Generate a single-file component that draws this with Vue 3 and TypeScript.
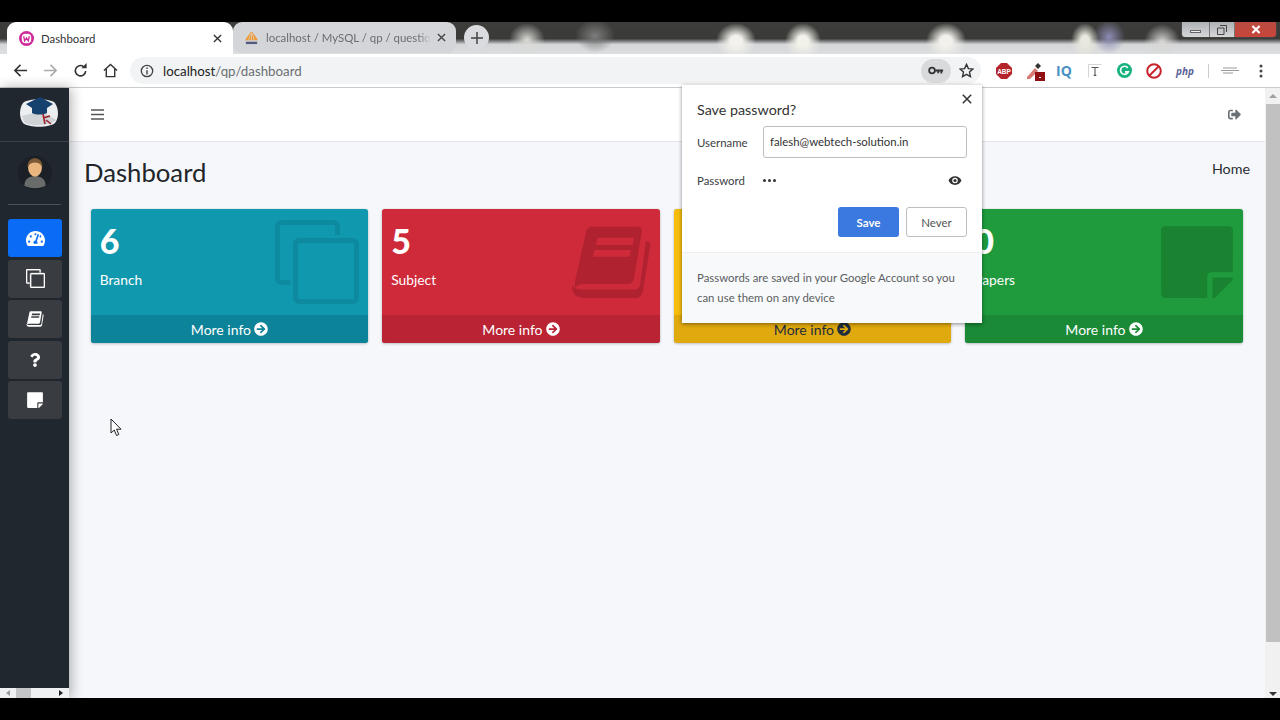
<script setup lang="ts">
interface Card {
  count: string
  label: string
  tone: string
  icon: string
  box: string
  path: string
}

const arrowPath = 'M256 8c137 0 248 111 248 248S393 504 256 504 8 393 8 256 119 8 256 8zm-28.9 143.6l75.5 72.4H120c-13.3 0-24 10.7-24 24v16c0 13.3 10.7 24 24 24h182.6l-75.5 72.4c-9.7 9.3-9.9 24.8-.4 34.3l11 10.9c9.4 9.4 24.6 9.4 33.9 0L404.3 273c9.4-9.4 9.4-24.6 0-33.9L271.6 106.3c-9.4-9.4-24.6-9.4-33.9 0l-11 10.9c-9.5 9.6-9.3 25.1.4 34.4z'
const bookPath = 'M648 80H785q17 0 14 17L776 236q-3 15-18 15H625q-18 0-24 12-4-12 1-30L632 100q4-20 16-20zM667 113H776L772 135H663zM658 150H767L763 170H654zM812 122L826 130 803 272q-4 20-22 21H625q-28 0-34-28-1-4 3-9 4 12 26 12H775q16 0 19-14z'
const notePath = 'M312 320h136V56c0-13.3-10.7-24-24-24H24C10.7 32 0 42.7 0 56v400c0 13.3 10.7 24 24 24h264V344c0-13.2 10.8-24 24-24zm129 55l-98 98c-4.500 4.500-10.600 7-17 7h-6V352h128v6.100c0 6.300-2.500 12.400-7 16.900z'
const clonePath = 'M24 18h54a6 6 0 0 1 6 6v54a6 6 0 0 1-6 6H24a6 6 0 0 1-6-6V24a6 6 0 0 1 6-6zm0 5a1 1 0 0 0-1 1v54a1 1 0 0 0 1 1h54a1 1 0 0 0 1-1V24a1 1 0 0 0-1-1zM6 0h53a6 6 0 0 1 6 6v9h-5V6a1 1 0 0 0-1-1H6a1 1 0 0 0-1 1v53a1 1 0 0 0 1 1h9v5H6a6 6 0 0 1-6-6V6a6 6 0 0 1 6-6z'
const gaugePath = 'M288 32C128.94 32 0 160.94 0 320c0 52.8 14.25 102.26 39.06 144.8 5.61 9.62 16.3 15.2 27.44 15.2h443c11.14 0 21.83-5.58 27.44-15.2C561.75 422.26 576 372.8 576 320c0-159.06-128.94-288-288-288zm0 64c14.71 0 26.58 10.13 30.32 23.65-1.11 2.26-2.64 4.23-3.45 6.67l-9.22 27.67c-5.13 3.49-10.97 6.01-17.64 6.01-17.67 0-32-14.33-32-32S270.33 96 288 96zM96 384c-17.67 0-32-14.33-32-32s14.33-32 32-32 32 14.33 32 32-14.33 32-32 32zm48-160c-17.67 0-32-14.33-32-32s14.33-32 32-32 32 14.33 32 32-14.33 32-32 32zm246.77-72.41l-61.33 184C343.13 347.33 352 364.54 352 384c0 11.72-3.38 22.55-8.88 32H232.88c-5.5-9.45-8.88-20.28-8.88-32 0-33.94 26.5-61.43 59.9-63.59l61.34-184.01c4.17-12.56 17.73-19.45 30.36-15.17 12.57 4.19 19.35 17.79 15.17 30.36zm14.66 57.2l15.52-46.55c3.47-1.29 7.13-2.23 11.05-2.23 17.67 0 32 14.33 32 32s-14.33 32-32 32c-11.38-.01-20.89-6.28-26.57-15.22zM480 384c-17.67 0-32-14.33-32-32s14.33-32 32-32 32 14.33 32 32-14.33 32-32 32z'
const questionPath = 'M202.021 0C122.202 0 70.503 32.703 29.914 91.026c-7.363 10.58-5.093 25.086 5.178 32.874l43.138 32.709c10.373 7.865 25.132 6.026 33.253-4.148 25.049-31.381 43.63-49.449 82.757-49.449 30.764 0 68.816 19.799 68.816 49.631 0 22.552-18.617 34.134-48.993 51.164-35.423 19.86-82.299 44.576-82.299 106.405V320c0 13.255 10.745 24 24 24h72.471c13.255 0 24-10.745 24-24v-5.773c0-42.86 125.268-44.645 125.268-160.627C377.504 66.256 286.902 0 202.021 0zM192 373.459c-38.196 0-69.271 31.075-69.271 69.271 0 38.195 31.075 69.27 69.271 69.27s69.271-31.075 69.271-69.271-31.075-69.27-69.271-69.27z'
const signOutPath = 'M497 273L329 441c-15 15-41 4.5-41-17v-96H152c-13.3 0-24-10.7-24-24v-96c0-13.3 10.7-24 24-24h136V88c0-21.4 25.9-32 41-17l168 168c9.3 9.4 9.3 24.6 0 34zM192 436v-40c0-6.6-5.4-12-12-12H96c-17.7 0-32-14.3-32-32V160c0-17.7 14.3-32 32-32h84c6.6 0 12-5.4 12-12V76c0-6.6-5.4-12-12-12H96c-53 0-96 43-96 96v192c0 53 43 96 96 96h84c6.6 0 12-5.4 12-12z'

const bookBox = '585 78 245 218'
const cloneBox = '0 0 84 84'

const navItems = [
  { box: '0 0 576 512', path: gaugePath, cls: 'is-active nav-gauge' },
  { box: cloneBox, path: clonePath, cls: 'nav-clone' },
  { box: bookBox, path: bookPath, cls: 'nav-book' },
  { box: '0 0 384 512', path: questionPath, cls: 'nav-question' },
  { box: '0 0 448 512', path: notePath, cls: 'nav-note' },
]

const cards: Card[] = [
  { count: '6', label: 'Branch', tone: 'teal', icon: 'ic-clone', box: cloneBox, path: clonePath },
  { count: '5', label: 'Subject', tone: 'red', icon: 'ic-book', box: bookBox, path: bookPath },
  { count: '', label: '', tone: 'yellow', icon: 'ic-q', box: '0 0 384 512', path: questionPath },
  { count: '0', label: 'Papers', tone: 'green', icon: 'ic-note', box: '0 0 448 512', path: notePath },
]
</script>

<template>
  <div class="screen">
    <div class="letterbox"></div>

    <div class="tabstrip">
      <div class="tab tab-active">
        <svg class="favicon" viewBox="0 0 16 16">
          <circle cx="8" cy="8" r="8" fill="#cd2a9b" />
          <rect x="3" y="3" width="10" height="10" rx="4" fill="#fff" />
          <path d="M5 5.500l1 5 2-3 2 3 1-5" fill="none" stroke="#cd2a9b" stroke-width="1.400" />
        </svg>
        <span class="tab-title">Dashboard</span>
        <svg class="tab-x" viewBox="0 0 10 10"><path d="M1 1l8 8M9 1l-8 8" stroke="#333" stroke-width="1.500" /></svg>
      </div>
      <div class="tab tab-idle">
        <svg class="favicon" viewBox="0 0 16 16">
          <path d="M1 11L7 2h2l6 9z" fill="#ee9a33" />
          <path d="M5 11l2-8M8 11V3M11 11L9 3" stroke="#d9d9dc" stroke-width=".7" />
          <rect x="2" y="12.500" width="12" height="2.500" fill="#555b80" />
        </svg>
        <span class="tab-title tab-title-idle">localhost / MySQL / qp / questio</span>
        <svg class="tab-x" viewBox="0 0 10 10"><path d="M1 1l8 8M9 1l-8 8" stroke="#444" stroke-width="1.500" /></svg>
      </div>
      <div class="new-tab">
        <svg viewBox="0 0 12 12"><path d="M6 0v12M0 6h12" stroke="#444" stroke-width="1.500" /></svg>
      </div>
      <div class="win-controls">
        <div class="win-btn win-min"><span></span></div>
        <div class="win-btn win-max">
          <svg viewBox="0 0 10 10"><path d="M3 .5h6.500v6.500M.5 3h6.500v6.500h-6.500z" fill="none" stroke="#444" /></svg>
        </div>
        <div class="win-btn win-close">
          <svg viewBox="0 0 10 10"><path d="M1 1l8 8M9 1l-8 8" stroke="#fff" stroke-width="2.400" /></svg>
        </div>
      </div>
    </div>

    <div class="toolbar">
      <svg class="tb-ico tb-first" viewBox="0 0 16 16"><path d="M15 8H2M8 2L2 8l6 6" fill="none" stroke="#333" stroke-width="1.700" /></svg>
      <svg class="tb-ico" viewBox="0 0 16 16"><path d="M1 8h13M8 2l6 6-6 6" fill="none" stroke="#aaa" stroke-width="1.700" /></svg>
      <svg class="tb-ico" viewBox="0 0 16 16"><path d="M13.500 8.500A5.500 5.500 0 1 1 11.500 4" fill="none" stroke="#333" stroke-width="1.700" /><path d="M9 5.500h5.500V0z" fill="#333" /></svg>
      <svg class="tb-ico" viewBox="0 0 16 16"><path d="M1 8l7-6.500L15 8M3.500 6.500V14.500h9V6.500" fill="none" stroke="#333" stroke-width="1.500" /></svg>
      <div class="omnibox">
        <svg class="info" viewBox="0 0 16 16"><circle cx="8" cy="8" r="6.500" fill="none" stroke="#444" stroke-width="1.500" /><path d="M8 7v5M8 4v1.600" stroke="#444" stroke-width="1.600" /></svg>
        <span class="url"><b>localhost</b>/qp/dashboard</span>
        <span class="omni-space"></span>
        <div class="key-chip">
          <svg viewBox="0 0 18 10"><circle cx="4.500" cy="5" r="3.200" fill="none" stroke="#333" stroke-width="2" /><path d="M8 4h9v2h-1v2.500h-2V6h-1.500v2h-2V6H8z" fill="#333" /></svg>
        </div>
        <svg class="star" viewBox="0 0 16 16"><path d="M8 1.500l2 4.500 4.800.5-3.600 3.200 1 4.800L8 12.100l-4.200 2.400 1-4.800L1.200 6.500 6 6z" fill="none" stroke="#333" stroke-width="1.500" /></svg>
      </div>
      <div class="extensions">
        <svg class="ext ext-abp" viewBox="0 0 16 16"><path d="M5 0h6l5 5v6l-5 5H5l-5-5V5z" fill="#b5232a" /><text x="8" y="10.500" class="abp-text" text-anchor="middle">ABP</text></svg>
        <svg class="ext ext-drop" viewBox="0 0 20 20"><path d="M1 16L9 7l3 3-8 8H1z" fill="#d97a72" /><path d="M9 5l3-3 3 3-3 3z" fill="#333" /><rect x="9" y="11" width="10" height="9" fill="#8f0f10" /><rect x="13" y="16" width="2" height="1" fill="#fff" /></svg>
        <span class="ext-iq">IQ</span>
        <svg class="ext ext-t" viewBox="0 0 16 16"><path d="M.5 15.500V.5h15" fill="none" stroke="#ccc" /><path d="M4 4h8M8 4v9M6.500 13h3" stroke="#555" stroke-width="1.200" fill="none" /></svg>
        <svg class="ext ext-g" viewBox="0 0 16 16"><circle cx="8" cy="8" r="8" fill="#15b27f" /><path d="M11.500 5.200A4.300 4.300 0 1 0 12 9.500H8.500" fill="none" stroke="#fff" stroke-width="1.800" /></svg>
        <svg class="ext ext-no" viewBox="0 0 16 16"><circle cx="8" cy="8" r="6.800" fill="none" stroke="#c8232c" stroke-width="2" /><path d="M3.500 12.500l9-9" stroke="#c8232c" stroke-width="2" /></svg>
        <span class="ext-php">php</span>
        <span class="ext-sep"></span>
        <svg class="ext ext-web" viewBox="0 0 18 8"><path d="M2 1h14M0 3.500h18M2 6h10" stroke="#999" stroke-width="1" /></svg>
        <svg class="ext-menu" viewBox="0 0 4 14"><circle cx="2" cy="2" r="1.500" fill="#444" /><circle cx="2" cy="7" r="1.500" fill="#444" /><circle cx="2" cy="12" r="1.500" fill="#444" /></svg>
      </div>
    </div>

    <div class="page">
      <aside class="sidebar">
        <div class="brand">
          <svg class="logo" viewBox="0 0 40 32">
            <path d="M4 7C9 2 31 2 36 7c4 6 4 15 0 20-6 5-26 5-32 0C0 21 0 13 4 7z" fill="#eceef0" />
            <path d="M3 20l20-5 14 9c-6 6-26 7-32 2z" fill="#cfd3d6" />
            <path d="M7 8L21 1l13 7-6 4v5c-5 2-11 2-15 0v-5z" fill="#16406e" />
            <path d="M24 18l2 10M24 22l7-2M27 24l5 4" stroke="#9a1f2a" stroke-width="1.600" fill="none" />
          </svg>
        </div>
        <div class="user">
          <svg class="avatar" viewBox="0 0 32 32">
            <circle cx="16" cy="16" r="16" fill="#1a2026" />
            <path d="M6 28c0-7 5-9 10-9s10 2 10 9c-5 3-15 3-20 0z" fill="#6a6b6b" />
            <ellipse cx="16" cy="11" rx="6.500" ry="8.500" fill="#eab57e" />
            <path d="M9 10c0-6 4-8 7-8s7 2 7 8c-2-3-4-4-7-4s-5 1-7 4z" fill="#7a5a36" />
          </svg>
        </div>
        <nav class="nav">
          <div v-for="item in navItems" :key="item.cls" class="nav-item" :class="item.cls">
            <svg :viewBox="item.box"><path :d="item.path" fill="#fff" fill-rule="evenodd" /></svg>
          </div>
        </nav>
        <div class="side-scroll">
          <span class="arrow-left"></span>
          <span class="side-thumb"></span>
          <span class="arrow-right"></span>
        </div>
      </aside>

      <main class="main">
        <header class="topbar">
          <svg class="burger" viewBox="0 0 13 11"><path d="M0 1h13M0 5.500h13M0 10h13" stroke="#555" stroke-width="1.500" /></svg>
          <svg class="signout" viewBox="0 0 512 512"><path :d="signOutPath" fill="#6b7075" /></svg>
        </header>
        <section class="content">
          <div class="title-row">
            <h1>Dashboard</h1>
            <span class="crumb">Home</span>
          </div>
          <div class="cards">
            <article v-for="c in cards" :key="c.tone" class="card" :class="c.tone">
              <div class="card-body">
                <div v-if="c.count" class="card-count">{{ c.count }}</div>
                <div v-if="c.label" class="card-label">{{ c.label }}</div>
                <svg class="card-icon" :class="c.icon" :viewBox="c.box"><path :d="c.path" fill-rule="evenodd" /></svg>
              </div>
              <div class="card-foot">
                <span>More info</span>
                <svg class="foot-arrow" viewBox="0 0 512 512"><path :d="arrowPath" /></svg>
              </div>
            </article>
          </div>
        </section>
      </main>

      <div class="vscroll">
        <span class="arrow-up"></span>
        <span class="v-thumb"></span>
        <span class="arrow-down"></span>
      </div>
    </div>

    <div class="letterbox"></div>

    <div class="popup">
      <svg class="pop-x" viewBox="0 0 10 10"><path d="M.8.8l8.400 8.400M9.200.8L.8 9.200" stroke="#333" stroke-width="1.500" /></svg>
      <div class="pop-main">
        <div class="pop-title">Save password?</div>
        <div class="pop-row">
          <span class="pop-label">Username</span>
          <div class="pop-input">falesh@webtech-solution.in</div>
        </div>
        <div class="pop-row pop-row-pass">
          <span class="pop-label">Password</span>
          <span class="dots">
            <i></i><i></i><i></i>
          </span>
          <svg class="eye" viewBox="0 0 16 12"><path d="M8 1C4.500 1 1.800 3 .6 6c1.200 3 3.900 5 7.400 5s6.200-2 7.400-5C14.200 3 11.500 1 8 1zm0 8.200A3.200 3.200 0 1 1 8 2.800a3.200 3.200 0 0 1 0 6.400z" fill="#333" /><circle cx="8" cy="6" r="1.800" fill="#333" /></svg>
        </div>
        <div class="pop-actions">
          <button class="btn btn-save">Save</button>
          <button class="btn btn-never">Never</button>
        </div>
      </div>
      <div class="pop-foot">Passwords are saved in your Google Account so you can use them on any device</div>
    </div>

    <svg class="cursor" viewBox="0 0 12 19">
      <path d="M1 1v14l3.300-3 2.200 5.500 2.300-1-2.200-5.300h4.400z" fill="#fff" stroke="#222" stroke-width="1" />
    </svg>
  </div>
</template>

<style>
html, body { margin: 0; background: #000; }
</style>

<style scoped>
.screen {
  position: relative;
  width: 1280px;
  height: 720px;
  overflow: hidden;
  display: flex;
  flex-direction: column;
  background: #000;
  font-family: "Lato", "Open Sans", sans-serif;
}
.letterbox { height: 22px; flex: none; background: #000; }

/* Browser tab strip */
.tabstrip {
  height: 32px;
  flex: none;
  display: flex;
  align-items: flex-end;
  position: relative;
  padding-left: 7px;
  background:
    radial-gradient(ellipse 18px 17px at 527px 18px, #dcdcd8, transparent),
    radial-gradient(ellipse 20px 17px at 595px 14px, #7d7d7d, transparent),
    radial-gradient(ellipse 20px 18px at 736px 19px, #f2f1ec 30%, transparent),
    radial-gradient(ellipse 18px 18px at 803px 19px, #f2f2ea 30%, transparent),
    radial-gradient(ellipse 20px 18px at 946px 19px, #f2f1ec 30%, transparent),
    radial-gradient(ellipse 14px 18px at 1085px 19px, #e8e8de 30%, transparent),
    radial-gradient(ellipse 16px 17px at 1109px 15px, #8d8cb4, transparent),
    radial-gradient(ellipse 18px 18px at 1162px 20px, #d8d8d6, transparent),
    linear-gradient(180deg, #3d3d3b 0, #3a3a38 52%, #d4d6d8 70%, #dcdee0 100%);
}
.tab {
  height: 32px;
  box-sizing: border-box;
  display: flex;
  align-items: center;
  border-radius: 9px 9px 0 0;
  font-size: 11.400px;
}
.tab-active { width: 226px; background: #fff; color: #333; padding: 0 11px 0 12px; }
.tab-idle {
  width: 223px;
  height: 31px;
  margin-bottom: 1px;
  background: #d3d5d9;
  color: #6a6d72;
  padding: 0 10px 0 11px;
  border-radius: 9px;
}
.favicon { width: 15px; height: 15px; flex: none; margin-right: 7px; }
.tab-title { flex: 1; white-space: nowrap; }
.tab-title-idle { -webkit-mask-image: linear-gradient(90deg, #000 92%, transparent 100%); mask-image: linear-gradient(90deg, #000 92%, transparent 100%); }
.tab-x { width: 9px; height: 9px; flex: none; margin-left: 6px; }
.new-tab {
  width: 25px;
  height: 25px;
  border-radius: 50%;
  background: #d9dbde;
  display: flex;
  align-items: center;
  justify-content: center;
  margin: 0 0 4px 8px;
}
.new-tab svg { width: 12px; height: 12px; }
.win-controls {
  position: absolute;
  top: 0;
  right: 3px;
  width: 96px;
  height: 16px;
  display: flex;
  border: 1px solid #444;
  border-top: 0;
  border-radius: 0 0 4px 4px;
  overflow: hidden;
  box-sizing: border-box;
}
.win-btn { display: flex; align-items: center; justify-content: center; }
.win-min { width: 27px; background: linear-gradient(#aeb1b4, #d5d7d9); }
.win-min span { width: 11px; height: 3px; background: #eee; border: 1px solid #666; box-sizing: border-box; margin-top: 4px; }
.win-max { width: 24px; background: linear-gradient(#aeb1b4, #d5d7d9); border-left: 1px solid #777; }
.win-max svg { width: 10px; height: 10px; }
.win-close { flex: 1; background: linear-gradient(#b84b41, #c9453a); border-left: 1px solid #777; }
.win-close svg { width: 10px; height: 9px; }

/* Browser toolbar */
.toolbar {
  height: 34px;
  flex: none;
  box-sizing: border-box;
  display: flex;
  align-items: center;
  background: #fff;
  border-bottom: 1px solid #c9cbcd;
  padding-left: 13px;
  padding-right: 13px;
}
.tb-ico { width: 15px; height: 15px; flex: none; margin-right: 15px; }
.omnibox {
  width: 851px;
  height: 27px;
  box-sizing: border-box;
  margin-left: -3px;
  border-radius: 14px;
  background: #f1f3f4;
  display: flex;
  align-items: center;
  padding: 0 7px 0 10px;
  flex: none;
}
.info { width: 14px; height: 14px; margin-right: 9px; flex: none; }
.url { font-size: 13.300px; color: #6c7075; white-space: nowrap; }
.url b { font-weight: 400; color: #222; }
.omni-space { flex: 1; }
.key-chip {
  width: 30px;
  height: 24px;
  border-radius: 12px;
  background: #d8dadc;
  display: flex;
  align-items: center;
  justify-content: center;
}
.key-chip svg { width: 16px; height: 9px; }
.star { width: 15px; height: 15px; margin: 0 0 0 8px; }
.extensions { flex: 1; display: flex; align-items: center; }
.ext { flex: none; display: block; }
.ext-abp { width: 16px; height: 16px; margin-left: 15px; }
.abp-text { font: 700 6.500px "Liberation Sans", sans-serif; fill: #fff; }
.ext-drop { width: 20px; height: 20px; margin-left: 14px; }
.ext-iq { font: 700 14px "Open Sans", sans-serif; color: #4a90c4; margin-left: 10px; width: 18px; }
.ext-t { width: 14px; height: 14px; margin-left: 14px; }
.ext-g { width: 15px; height: 15px; margin-left: 15px; }
.ext-no { width: 16px; height: 16px; margin-left: 14px; }
.ext-php { font: italic 700 10px "Open Sans", sans-serif; color: #5a6398; margin-left: 14px; width: 17px; }
.ext-sep { width: 1px; height: 14px; background: #ccc; margin-left: 15px; }
.ext-web { width: 18px; height: 8px; margin-left: 12px; }
.ext-menu { width: 4px; height: 14px; margin-left: 20px; flex: none; }

/* Page */
.page { flex: 1; min-height: 0; display: flex; background: #f5f7fb; }
.sidebar {
  width: 69px;
  flex: none;
  display: flex;
  flex-direction: column;
  background: #20272e;
  box-shadow: 2px 0 12px rgba(0, 0, 0, .32);
  position: relative;
  z-index: 1;
}
.brand {
  height: 54px;
  flex: none;
  box-sizing: border-box;
  border-bottom: 1px solid #3a4148;
  display: flex;
  align-items: flex-start;
  justify-content: center;
  padding-top: 8px;
  padding-left: 8px;
}
.logo { width: 40px; height: 32px; }
.user {
  height: 63px;
  flex: none;
  margin: 0 8px;
  box-sizing: border-box;
  border-bottom: 1px solid #4a5058;
  display: flex;
  align-items: flex-start;
  justify-content: center;
  padding-top: 14px;
}
.avatar { width: 34px; height: 34px; }
.nav {
  flex: 1;
  padding: 14px 7px 0 8px;
  display: flex;
  flex-direction: column;
  gap: 2.500px;
}
.nav-item {
  height: 38px;
  border-radius: 3px;
  background: #393c41;
  display: flex;
  align-items: center;
  justify-content: center;
}
.nav-item svg { height: 18px; width: 18px; }
.is-active { background: #0a6cf5; }
.nav-gauge svg { width: 19px; height: 19px; }
.nav-clone svg { width: 19px; height: 19px; }
.nav-clone path { stroke: #fff; stroke-width: 1.500px; }
.nav-question svg { height: 14px; }
.side-scroll {
  height: 10px;
  flex: none;
  background: #eff0f1;
  display: flex;
  align-items: center;
  position: relative;
  padding: 0 6px;
}
.arrow-left { border: 3px solid transparent; border-right: 4px solid #999; border-left: 0; }
.side-thumb { width: 15px; height: 10px; background: #c4c5c6; margin-left: 6px; }
.arrow-right { border: 3px solid transparent; border-left: 4px solid #222; border-right: 0; margin-left: auto; }

.main { flex: 1; min-width: 0; display: flex; flex-direction: column; }
.topbar {
  height: 54px;
  flex: none;
  box-sizing: border-box;
  background: #fff;
  border-bottom: 1px solid #e4e6e8;
  display: flex;
  align-items: center;
  justify-content: space-between;
  padding: 0 24px 0 22px;
}
.burger { width: 13px; height: 11px; }
.signout { width: 13px; height: 13px; }
.content { flex: 1; padding: 0 15px; }
.title-row {
  height: 67px;
  display: flex;
  align-items: flex-start;
  justify-content: space-between;
}
h1 {
  margin: 12px 0 0;
  font: 400 25.700px/36px "Lato", sans-serif;
  color: #212529;
}
.crumb { font: 400 14.300px/20px "Lato", sans-serif; color: #2a2e33; margin-top: 17px; }
.cards {
  display: grid;
  grid-template-columns: repeat(4, 1fr);
  gap: 14px;
  padding: 0 7.300px 0 6.700px;
}
.card {
  height: 134px;
  border-radius: 3px;
  display: flex;
  flex-direction: column;
  overflow: hidden;
  color: #fff;
  box-shadow: 0 0 1px rgba(0, 0, 0, .25), 0 1px 3px rgba(0, 0, 0, .2);
  font-family: "Lato", sans-serif;
}
.card-body { flex: 1; position: relative; padding: 12px 9px 0; }
.card-count { font-size: 34px; font-weight: 900; line-height: 40px; }
.card-label { font-size: 13.800px; line-height: 20px; margin-top: 9px; }
.card-icon { position: absolute; }
.ic-clone { width: 84px; height: 84px; right: 9px; top: 11px; }
.ic-book { width: 82px; height: 73px; right: 8px; top: 17px; }
.ic-q { width: 60px; height: 70px; right: 12px; top: 15px; }
.ic-note { width: 72px; height: 82px; right: 10px; top: 12px; }
.card-foot {
  height: 28px;
  flex: none;
  display: flex;
  align-items: center;
  justify-content: center;
  gap: 3px;
  font-size: 14px;
}
.foot-arrow { width: 14px; height: 14px; fill: currentColor; }
.teal { background: #0f98ae; }
.teal .card-foot { background: #0c8398; }
.teal .card-icon { fill: #0e8aa0; }
.red { background: #cf2a3a; }
.red .card-foot { background: #b92334; }
.red .card-icon { fill: #b12231; }
.yellow { background: #f6bd0c; color: #1f2d3d; }
.yellow .card-foot { background: #e0a90d; }
.yellow .card-icon { fill: #dba90b; }
.green { background: #1f9b3e; }
.green .card-foot { background: #1a8a37; }
.green .card-icon { fill: #198331; }

.vscroll {
  width: 15px;
  flex: none;
  background: #f1f1f1;
  display: flex;
  flex-direction: column;
  align-items: flex-end;
}
.arrow-up { border: 4px solid transparent; border-bottom: 4px solid #a0a0a0; border-top: 0; margin: 6px 3px 0 0; }
.v-thumb { width: 14px; height: 538px; background: #c1c1c1; margin-top: 6px; }
.arrow-down { border: 4px solid transparent; border-top: 4px solid #333; border-bottom: 0; margin: auto 3px 2px 0; }

/* Password bubble */
.popup {
  position: absolute;
  left: 682px;
  top: 85px;
  width: 300px;
  height: 238px;
  z-index: 3;
  background: #fff;
  display: flex;
  flex-direction: column;
  box-shadow: 0 1px 4px rgba(0, 0, 0, .45);
  font-family: "Lato", "Open Sans", sans-serif;
  color: #3c4043;
}
.pop-x { position: absolute; top: 9px; right: 10px; width: 10px; height: 10px; }
.pop-main { height: 167px; flex: none; box-sizing: border-box; padding: 15px; }
.pop-title { font-size: 14.300px; line-height: 20px; color: #333; }
.pop-row { display: flex; align-items: center; margin-top: 6px; font-size: 11.400px; }
.pop-label { width: 66px; flex: none; }
.pop-input {
  flex: 1;
  height: 32px;
  box-sizing: border-box;
  border: 1px solid #bcbec1;
  border-radius: 3px;
  padding: 0 6px;
  line-height: 30px;
  color: #333;
}
.pop-row-pass { margin-top: 7px; height: 30px; }
.dots { display: flex; gap: 2px; }
.dots i { width: 3px; height: 3px; border-radius: 50%; background: #333; display: block; }
.eye { width: 14px; height: 11px; margin-left: auto; margin-right: 5px; }
.pop-actions { display: flex; justify-content: flex-end; gap: 7px; margin-top: 12px; }
.btn {
  width: 61px;
  height: 30px;
  border-radius: 3px;
  font: 400 11.500px "Lato", sans-serif;
  box-sizing: border-box;
  padding: 0;
}
.btn-save { background: #3b78e0; border: 0; color: #fff; font-weight: 700; }
.btn-never { background: #fff; border: 1px solid #bcbec1; color: #555; }
.pop-foot {
  flex: 1;
  box-sizing: border-box;
  background: #f8f9fa;
  border-top: 1px solid #eceeef;
  padding: 15px 15px 0;
  font-size: 11.400px;
  line-height: 20px;
  color: #5a5e63;
}
.cursor { position: absolute; left: 110px; top: 418px; width: 12px; height: 19px; z-index: 4; }
</style>
